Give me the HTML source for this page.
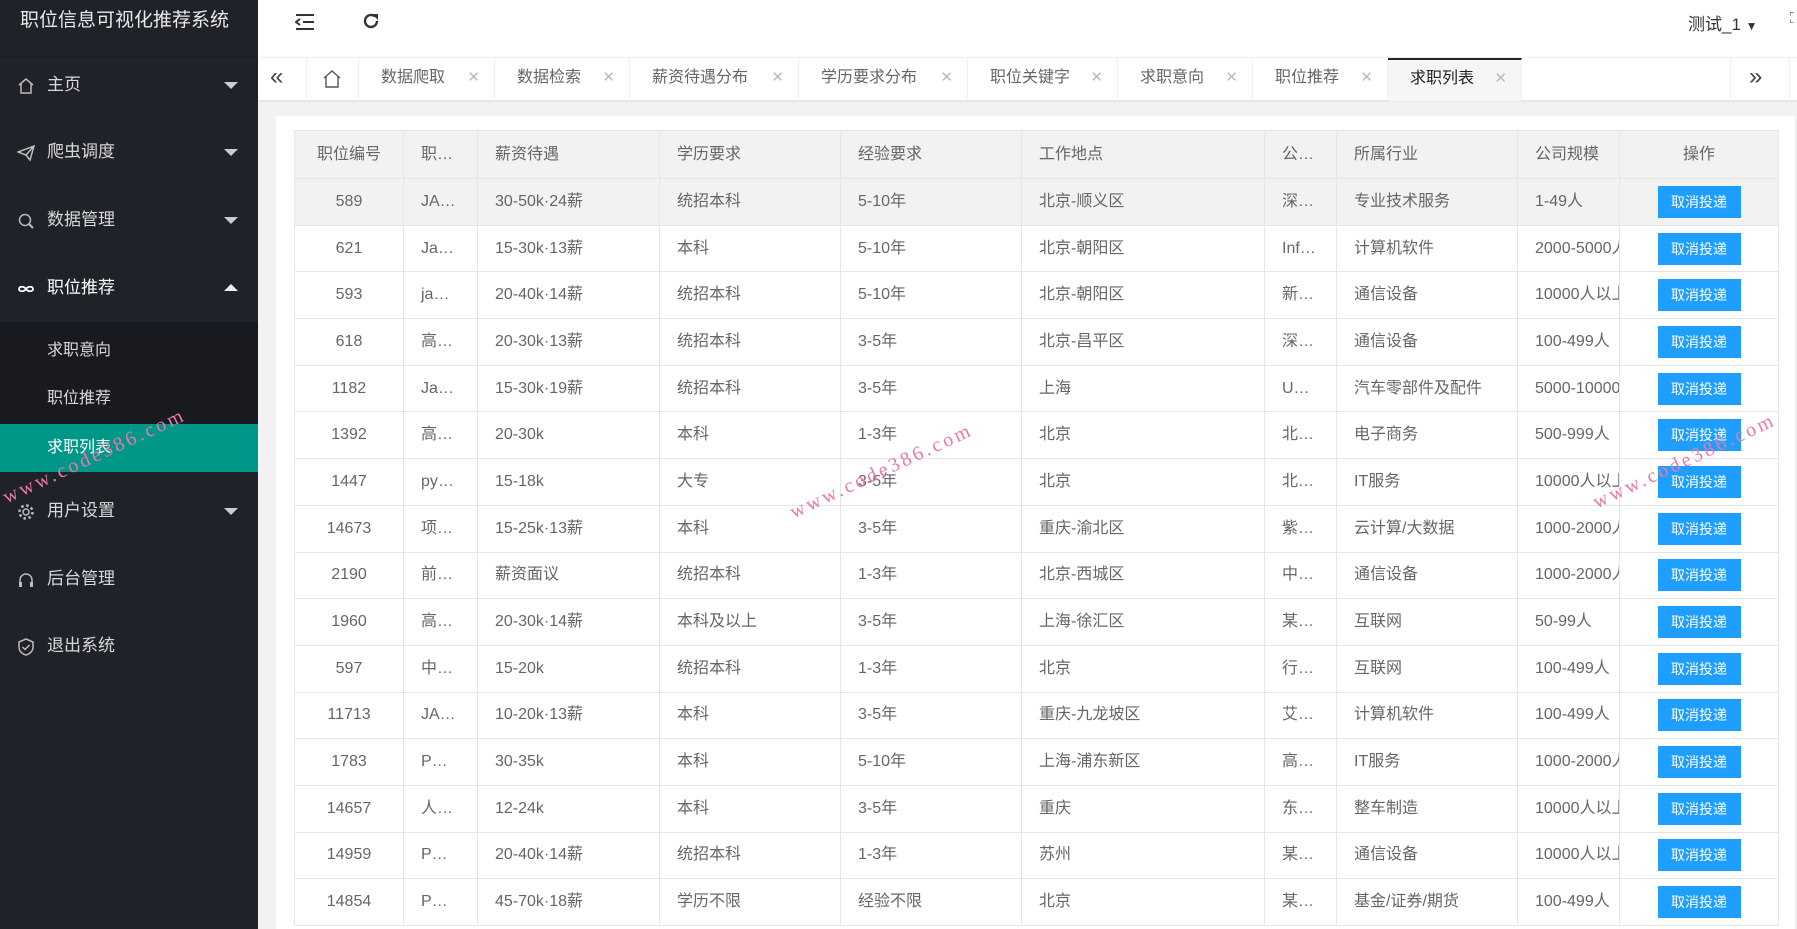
<!DOCTYPE html>
<html><head><meta charset="utf-8"><style>
*{box-sizing:border-box;margin:0;padding:0}
html,body{width:1797px;height:929px;overflow:hidden}
body{background:#f2f2f2;font-family:"Liberation Sans","Noto Sans CJK SC",sans-serif;position:relative}
.side{position:absolute;left:0;top:0;width:258px;height:929px;background:#20222a;color:#d2d2d2}
.logo{height:57px;line-height:42px;padding-left:20px;font-size:19px;color:#e8e8e8;border-bottom:1px solid #1b1d24}
.mi{position:absolute;left:0;width:258px;height:48px;line-height:48px;font-size:17px;color:#d8d8d8}
.mi svg{position:absolute;left:17px;top:16px}
.mi .t{position:absolute;left:47px}
.mi .ar{position:absolute;right:20px;top:21px;width:0;height:0;border-left:7px solid transparent;border-right:7px solid transparent;border-top:7px solid #ccc}
.mi .ar.up{border-top:none;border-bottom:7px solid #eee;top:20px}
.sub{position:absolute;left:0;top:322px;width:258px;height:150px;background:#181a20}
.active{background:#009688;color:#fff}
.top{position:absolute;left:258px;top:0;right:0;height:57px;background:#fff}
.tabs{position:absolute;left:258px;top:57px;right:0;height:43px;background:#fff;border-top:1px solid #f0f0f0;box-shadow:0 1px 2px rgba(0,0,0,.1)}
.tab{position:absolute;top:0;height:43px;line-height:40px;font-size:16px;color:#666;border-right:1px solid #f0f0f0;padding-left:22px}
.tab .x{position:absolute;right:14px;top:0;color:#bbb;font-size:15px}
.card{position:absolute;left:276px;top:116px;width:1519px;height:813px;background:#fff}
table{position:absolute;left:294px;top:130px;width:1484px;border-collapse:collapse;table-layout:fixed;font-size:16px;color:#666}
td,th{border:1px solid #e6e6e6;height:46.7px;line-height:20px;padding:0 17px;white-space:nowrap;overflow:hidden;font-weight:normal;text-align:left;vertical-align:middle}
th{background:#f2f2f2;height:48px}
td.c,th.c{text-align:center;padding:0}
td.cl{padding-right:0;text-overflow:clip}
tr.h td{background:#f2f2f2}
.op{box-shadow:-3px 0 6px rgba(0,0,0,.08)}
.btn{display:inline-block;width:83px;height:32px;line-height:32px;background:#1e9fff;color:#fff;font-size:14px;text-align:center;vertical-align:middle}
.wm{position:absolute;color:#e87aa8;font-family:"Liberation Serif",serif;font-size:20px;transform:rotate(-25deg);letter-spacing:3px;white-space:nowrap}
</style></head><body>
<div class="side">
<div class="logo">职位信息可视化推荐系统</div>
<div class="mi" style="top:61px"><svg width="18" height="18" viewBox="0 0 18 18"><path d="M2 8L9 2l7 6M4 7v9h10V7" stroke="#bbb" stroke-width="1.5" fill="none"/></svg><span class="t">主页</span><span class="ar"></span></div>
<div class="mi" style="top:128px"><svg width="18" height="18" viewBox="0 0 18 18"><path d="M1 8L17 2l-4 14-4-5zM9 11l8-9" stroke="#bbb" stroke-width="1.5" fill="none"/></svg><span class="t">爬虫调度</span><span class="ar"></span></div>
<div class="mi" style="top:196px"><svg width="18" height="18" viewBox="0 0 18 18"><circle cx="8" cy="8" r="5.5" stroke="#bbb" stroke-width="1.5" fill="none"/><path d="M12 12l4 4" stroke="#bbb" stroke-width="2"/></svg><span class="t">数据管理</span><span class="ar"></span></div>
<div class="mi" style="top:264px;color:#fff"><svg width="18" height="18" viewBox="0 0 18 18"><path d="M9 9c-2-3-7-3-7 0s5 3 7 0 7-3 7 0-5 3-7 0" stroke="#fff" stroke-width="1.8" fill="none"/></svg><span class="t">职位推荐</span><span class="ar up"></span></div>
<div class="sub"></div>
<div class="mi" style="top:327px;font-size:16px"><span class="t">求职意向</span></div>
<div class="mi" style="top:375px;font-size:16px"><span class="t">职位推荐</span></div>
<div class="mi active" style="top:424px;font-size:16px;color:#fff"><span class="t">求职列表</span></div>
<div class="mi" style="top:487px"><svg width="18" height="18" viewBox="0 0 18 18"><circle cx="9" cy="9" r="3" stroke="#bbb" stroke-width="1.5" fill="none"/><circle cx="9" cy="9" r="6.5" stroke="#bbb" stroke-width="2.5" stroke-dasharray="2.5 2.6" fill="none"/></svg><span class="t">用户设置</span><span class="ar"></span></div>
<div class="mi" style="top:555px"><svg width="18" height="18" viewBox="0 0 18 18"><path d="M3 14V9a6 6 0 0 1 12 0v5" stroke="#bbb" stroke-width="1.5" fill="none"/><rect x="2" y="11" width="3" height="5" fill="#bbb"/><rect x="13" y="11" width="3" height="5" fill="#bbb"/></svg><span class="t">后台管理</span></div>
<div class="mi" style="top:622px"><svg width="18" height="18" viewBox="0 0 18 18"><path d="M9 1l7 3v5c0 4-3 7-7 8-4-1-7-4-7-8V4z" stroke="#bbb" stroke-width="1.5" fill="none"/><path d="M5.5 9l2.5 2.5 4.5-4.5" stroke="#bbb" stroke-width="1.5" fill="none"/></svg><span class="t">退出系统</span></div>
</div>
<div class="top">
<svg style="position:absolute;left:37px;top:13px" width="20" height="18" viewBox="0 0 20 18"><path d="M1 2h18M8 9h11M1 16h18M5 6L1 9l4 3" stroke="#333" stroke-width="2" fill="none"/></svg>
<svg style="position:absolute;left:104px;top:12px" width="18" height="18" viewBox="0 0 18 18"><path d="M15 9a6 6 0 1 1-2-4.5" stroke="#333" stroke-width="2.4" fill="none"/><path d="M10 2h6v6z" fill="#333"/></svg>
<div style="position:absolute;left:1430px;top:10px;font-size:17px;color:#333">测试_1 <span style="font-size:12px">▼</span></div>
<div style="position:absolute;left:1532px;top:10px;font-size:15px;color:#666">⛶</div>
</div>
<div class="tabs">
<div class="tab" style="left:0;width:49px;padding-left:12px;font-size:24px;line-height:38px;color:#444">«</div>
<div class="tab" style="left:49px;width:52px;padding-left:15px"><svg style="margin-top:11px" width="20" height="20" viewBox="0 0 20 20"><path d="M2 9l8-7 8 7M4 8v10h12V8" stroke="#555" stroke-width="1.4" fill="none"/></svg></div>
<div class="tab" style="left:101px;width:136px">数据爬取<span class="x">✕</span></div>
<div class="tab" style="left:237px;width:135px">数据检索<span class="x">✕</span></div>
<div class="tab" style="left:372px;width:169px">薪资待遇分布<span class="x">✕</span></div>
<div class="tab" style="left:541px;width:169px">学历要求分布<span class="x">✕</span></div>
<div class="tab" style="left:710px;width:150px">职位关键字<span class="x">✕</span></div>
<div class="tab" style="left:860px;width:135px">求职意向<span class="x">✕</span></div>
<div class="tab" style="left:995px;width:135px">职位推荐<span class="x">✕</span></div>
<div class="tab" style="left:1130px;width:134px;background:#f6f6f6;color:#222;border-top:2px solid #222;line-height:38px">求职列表<span class="x" style="line-height:38px">✕</span></div>
<div class="tab" style="left:1472px;width:60px;border-left:1px solid #f0f0f0;padding-left:18px;font-size:24px;line-height:38px;color:#444">»</div>
</div>
<div class="card"></div>
<table>
<colgroup><col style="width:109px"><col style="width:74px"><col style="width:182px"><col style="width:181px"><col style="width:181px"><col style="width:243px"><col style="width:72px"><col style="width:181px"><col style="width:102px"><col style="width:159px"></colgroup>
<tr><th class="c">职位编号</th><th>职…</th><th>薪资待遇</th><th>学历要求</th><th>经验要求</th><th>工作地点</th><th>公…</th><th>所属行业</th><th class="cl">公司规模</th><th class="c op">操作</th></tr>
<tr class="h"><td class="c">589</td><td>JA…</td><td>30-50k·24薪</td><td>统招本科</td><td>5-10年</td><td>北京-顺义区</td><td>深…</td><td>专业技术服务</td><td class="cl">1-49人</td><td class="c op"><span class="btn">取消投递</span></td></tr>
<tr><td class="c">621</td><td>Ja…</td><td>15-30k·13薪</td><td>本科</td><td>5-10年</td><td>北京-朝阳区</td><td>Inf…</td><td>计算机软件</td><td class="cl">2000-5000人</td><td class="c op"><span class="btn">取消投递</span></td></tr>
<tr><td class="c">593</td><td>ja…</td><td>20-40k·14薪</td><td>统招本科</td><td>5-10年</td><td>北京-朝阳区</td><td>新…</td><td>通信设备</td><td class="cl">10000人以上</td><td class="c op"><span class="btn">取消投递</span></td></tr>
<tr><td class="c">618</td><td>高…</td><td>20-30k·13薪</td><td>统招本科</td><td>3-5年</td><td>北京-昌平区</td><td>深…</td><td>通信设备</td><td class="cl">100-499人</td><td class="c op"><span class="btn">取消投递</span></td></tr>
<tr><td class="c">1182</td><td>Ja…</td><td>15-30k·19薪</td><td>统招本科</td><td>3-5年</td><td>上海</td><td>U…</td><td>汽车零部件及配件</td><td class="cl">5000-10000人</td><td class="c op"><span class="btn">取消投递</span></td></tr>
<tr><td class="c">1392</td><td>高…</td><td>20-30k</td><td>本科</td><td>1-3年</td><td>北京</td><td>北…</td><td>电子商务</td><td class="cl">500-999人</td><td class="c op"><span class="btn">取消投递</span></td></tr>
<tr><td class="c">1447</td><td>py…</td><td>15-18k</td><td>大专</td><td>3-5年</td><td>北京</td><td>北…</td><td>IT服务</td><td class="cl">10000人以上</td><td class="c op"><span class="btn">取消投递</span></td></tr>
<tr><td class="c">14673</td><td>项…</td><td>15-25k·13薪</td><td>本科</td><td>3-5年</td><td>重庆-渝北区</td><td>紫…</td><td>云计算/大数据</td><td class="cl">1000-2000人</td><td class="c op"><span class="btn">取消投递</span></td></tr>
<tr><td class="c">2190</td><td>前…</td><td>薪资面议</td><td>统招本科</td><td>1-3年</td><td>北京-西城区</td><td>中…</td><td>通信设备</td><td class="cl">1000-2000人</td><td class="c op"><span class="btn">取消投递</span></td></tr>
<tr><td class="c">1960</td><td>高…</td><td>20-30k·14薪</td><td>本科及以上</td><td>3-5年</td><td>上海-徐汇区</td><td>某…</td><td>互联网</td><td class="cl">50-99人</td><td class="c op"><span class="btn">取消投递</span></td></tr>
<tr><td class="c">597</td><td>中…</td><td>15-20k</td><td>统招本科</td><td>1-3年</td><td>北京</td><td>行…</td><td>互联网</td><td class="cl">100-499人</td><td class="c op"><span class="btn">取消投递</span></td></tr>
<tr><td class="c">11713</td><td>JA…</td><td>10-20k·13薪</td><td>本科</td><td>3-5年</td><td>重庆-九龙坡区</td><td>艾…</td><td>计算机软件</td><td class="cl">100-499人</td><td class="c op"><span class="btn">取消投递</span></td></tr>
<tr><td class="c">1783</td><td>P…</td><td>30-35k</td><td>本科</td><td>5-10年</td><td>上海-浦东新区</td><td>高…</td><td>IT服务</td><td class="cl">1000-2000人</td><td class="c op"><span class="btn">取消投递</span></td></tr>
<tr><td class="c">14657</td><td>人…</td><td>12-24k</td><td>本科</td><td>3-5年</td><td>重庆</td><td>东…</td><td>整车制造</td><td class="cl">10000人以上</td><td class="c op"><span class="btn">取消投递</span></td></tr>
<tr><td class="c">14959</td><td>P…</td><td>20-40k·14薪</td><td>统招本科</td><td>1-3年</td><td>苏州</td><td>某…</td><td>通信设备</td><td class="cl">10000人以上</td><td class="c op"><span class="btn">取消投递</span></td></tr>
<tr><td class="c">14854</td><td>P…</td><td>45-70k·18薪</td><td>学历不限</td><td>经验不限</td><td>北京</td><td>某…</td><td>基金/证券/期货</td><td class="cl">100-499人</td><td class="c op"><span class="btn">取消投递</span></td></tr>
</table>
<div class="wm" style="left:-5px;top:445px">www.code386.com</div>
<div class="wm" style="left:782px;top:460px">www.code386.com</div>
<div class="wm" style="left:1585px;top:450px">www.code386.com</div>
</body></html>
